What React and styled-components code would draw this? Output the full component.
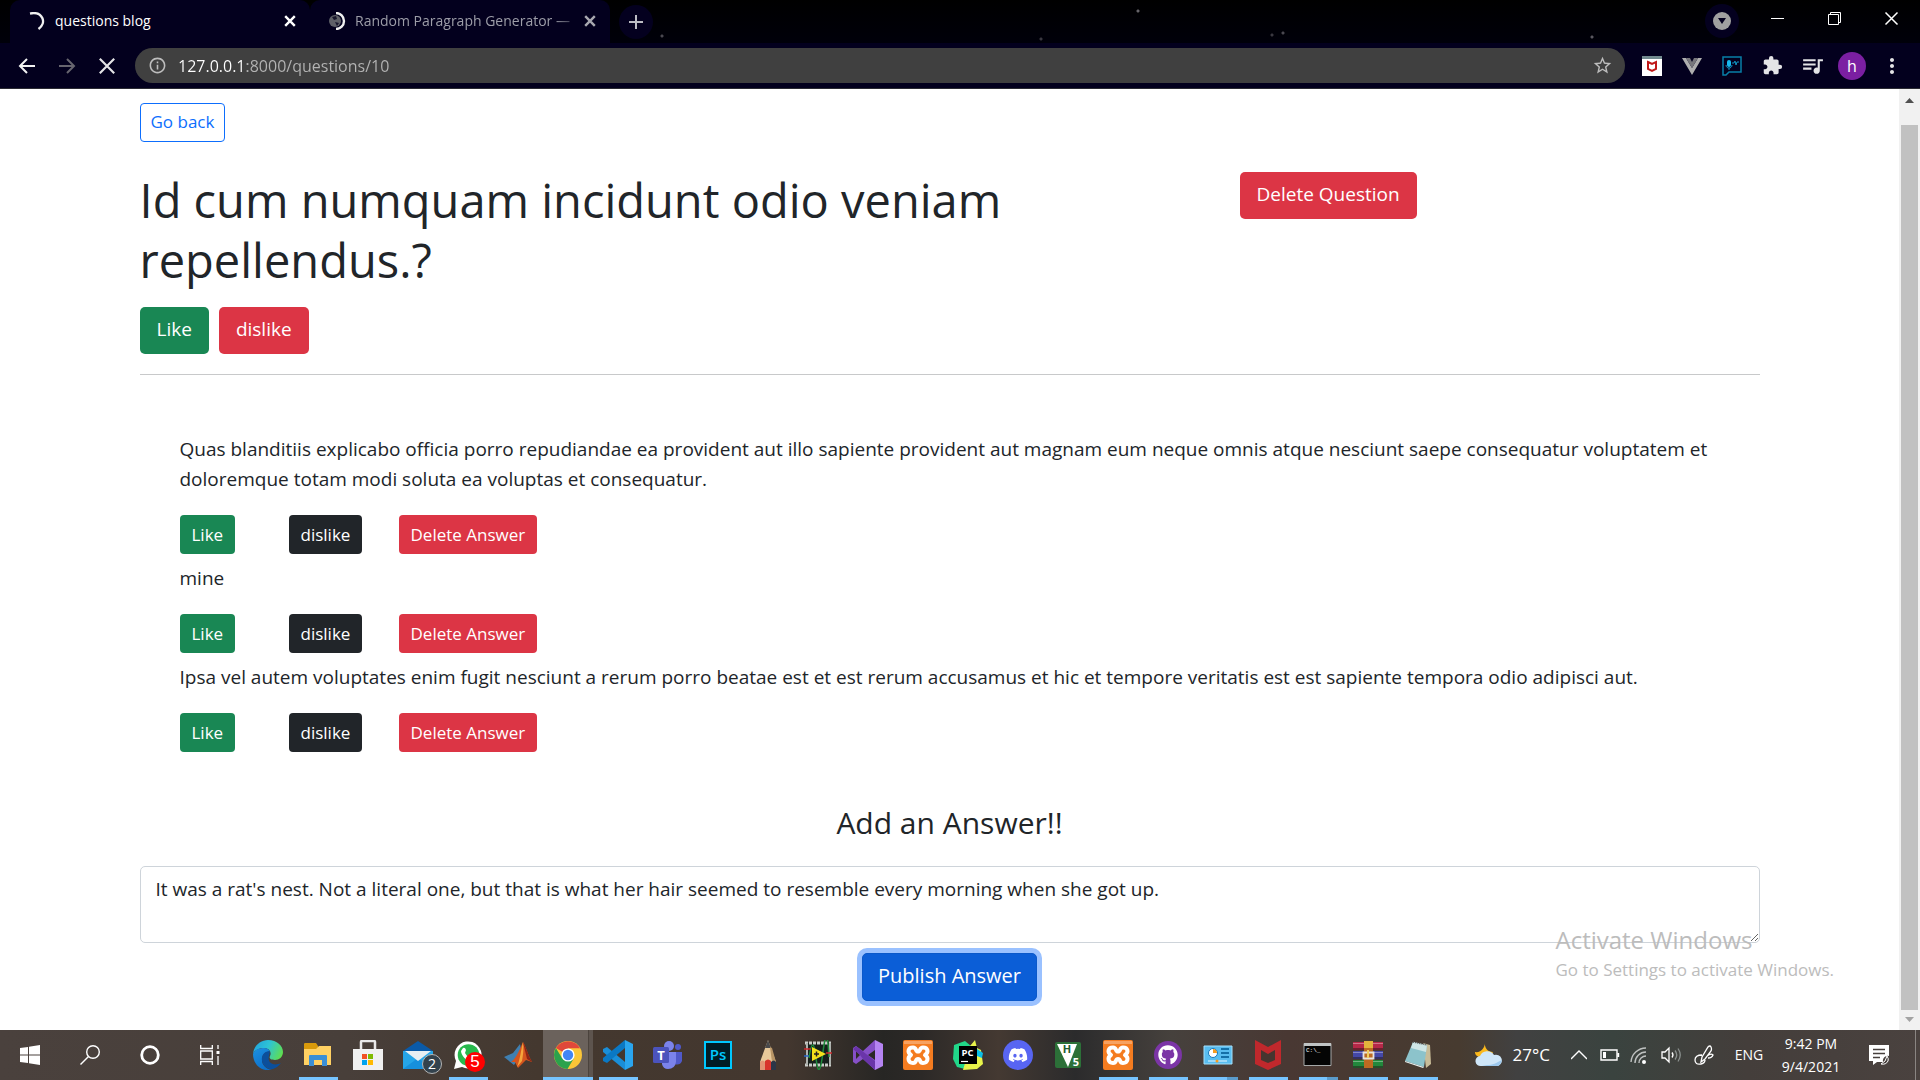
import React from 'react';
import styled, { createGlobalStyle, css } from 'styled-components';
import { FaDiscord, FaGithub } from 'react-icons/fa';
import { MdExtension, MdQueueMusic, MdStarBorder, MdInfoOutline, MdMoreVert } from 'react-icons/md';

const Global = createGlobalStyle`
  *, *::before, *::after { box-sizing: border-box; }
  body { margin: 0; background: #fff; font-family: "Open Sans", "Noto Sans", sans-serif; }
  button, input, textarea { font-family: inherit; }
  button { cursor: pointer; }
  svg { display: block; flex: none; }
`;

const Screen = styled.div`
  height: 100vh;
  display: flex;
  flex-direction: column;
  overflow: hidden;
`;

/* ---------- browser frame ---------- */

const TabStrip = styled.header`
  height: 43px;
  flex: none;
  display: flex;
  align-items: stretch;
  padding-left: 10px;
  background:
    radial-gradient(circle at 1138px 11px, #66646a 0 1px, transparent 2px),
    radial-gradient(circle at 662px 36px, #4a4850 0 1px, transparent 2px),
    radial-gradient(circle at 1041px 39px, #3a3840 0 1px, transparent 2px),
    radial-gradient(circle at 1272px 35px, #3a3840 0 1px, transparent 2px),
    radial-gradient(circle at 1283px 33px, #4a4850 0 1px, transparent 2px),
    radial-gradient(circle at 1592px 37px, #5a5860 0 1px, transparent 2px),
    linear-gradient(#000, #00000a);
`;

const Tab = styled.div`
  width: 300px;
  display: flex;
  align-items: center;
  padding: 0 12px 2px 18px;
  background: #03001e;
  border-radius: 10px 10px 0 0;
  color: ${(p) => (p.$active ? '#fff' : '#9d9da8')};
  font-size: 14px;
  line-height: 20px;
`;

const TabTitle = styled.span`
  flex: 1;
  min-width: 0;
  margin: 0 0 0 9px;
  white-space: nowrap;
  ${(p) => p.$fade && css`
    mask-image: linear-gradient(90deg, #000 88%, transparent);
  `}
`;

const IconButton = styled.button`
  width: ${(p) => p.$w || 40}px;
  height: ${(p) => p.$h || 34}px;
  flex: none;
  display: flex;
  align-items: center;
  justify-content: center;
  padding: 0;
  border: 0;
  border-radius: ${(p) => (p.$round ? '50%' : 0)};
  background: ${(p) => (p.$round ? '#04001f' : 'transparent')};
  color: ${(p) => p.$color || '#e4e4e6'};
`;

const NewTab = styled.div`
  display: flex;
  align-items: center;
  margin-left: 9px;
`;

const WindowControls = styled.div`
  display: flex;
  align-items: flex-start;
  margin-left: auto;
  padding-top: 4px;
`;

const SearchTabs = styled.div`
  margin-right: 10px;
`;

const Toolbar = styled.nav`
  height: 46px;
  flex: none;
  display: flex;
  align-items: center;
  padding: 0 8px 0 7px;
  background: #03001e;
  border-bottom: 1px solid #2b2b33;
`;

const AddressBar = styled.label`
  flex: 1;
  height: 35px;
  display: flex;
  align-items: center;
  gap: 11px;
  margin: 0 7px 0 8px;
  padding: 0 12px 0 13px;
  border-radius: 18px;
  background: #404040;
  color: #bdbdbd;
`;

const AddressInput = styled.input`
  flex: 1;
  min-width: 0;
  height: 24px;
  padding: 0;
  border: 0;
  outline: 0;
  font-size: 16px;
  line-height: 24px;
  color: transparent;
  background: linear-gradient(90deg, #fff 69px, #b4b4b4 69px);
  background-clip: text;
  -webkit-background-clip: text;
`;

const Avatar = styled.span`
  width: 28px;
  height: 28px;
  display: flex;
  align-items: center;
  justify-content: center;
  border-radius: 50%;
  background: #7b1fa2;
  color: #fff;
  font-size: 16px;
  line-height: 20px;
`;

/* ---------- page ---------- */

const Viewport = styled.div`
  flex: 1;
  min-height: 0;
  display: flex;
  position: relative;
  color: #212529;
  background: #fff;
`;

const Scroller = styled.main`
  flex: 1;
  min-width: 0;
  overflow: hidden;
`;

const Container = styled.div`
  max-width: 1650px;
  margin: 0 auto;
  padding: 14px 15px 0;
`;

const tones = {
  green: '#198754',
  red: '#dc3545',
  dark: '#212529',
};

const Button = styled.button`
  display: block;
  height: ${(p) => (p.$small ? 39 : 47)}px;
  padding: ${(p) => (p.$small ? '0 12px' : '0 17px 3px')};
  border: 0;
  border-radius: ${(p) => (p.$small ? 4 : 5)}px;
  background: ${(p) => tones[p.$tone]};
  color: #fff;
  font-size: ${(p) => (p.$small ? 17 : 19)}px;
  line-height: 28px;
  white-space: nowrap;
`;

const BackLink = styled.a`
  display: inline-flex;
  align-items: center;
  height: 39px;
  padding: 0 10px 2px;
  border: 1px solid #0d6efd;
  border-radius: 4px;
  color: #0d6efd;
  font-size: 17px;
  line-height: 26px;
  text-decoration: none;
  vertical-align: top;
`;

const Row = styled.div`
  display: flex;
  margin: 30px -15px 0;
`;

const Column = styled.div`
  width: ${(p) => p.$share};
  padding: 0 15px;
`;

const Title = styled.h1`
  margin: -2px 0 17px;
  font-size: 47px;
  font-weight: 400;
  line-height: 60px;
`;

const Votes = styled.div`
  display: flex;
  gap: 10px;
`;

const Rule = styled.hr`
  height: 1px;
  margin: 20px 0 0;
  border: 0;
  background: #c8c9ca;
`;

const Answers = styled.section`
  display: grid;
  gap: 9px;
  padding: 59px 40px 0;
`;

const AnswerText = styled.p`
  margin: 0 0 21px;
  font-size: 19px;
  line-height: 30px;
`;

const AnswerActions = styled.div`
  display: grid;
  grid-template-columns: 109px 110px auto;
  justify-content: start;
  justify-items: start;
`;

const AnswerForm = styled.form`
  display: flex;
  flex-direction: column;
  align-items: center;
  padding-top: 52px;
`;

const FormTitle = styled.h3`
  margin: 0 0 24px;
  font-size: 30px;
  font-weight: 400;
  line-height: 38px;
`;

const AnswerBox = styled.textarea`
  display: block;
  width: 100%;
  height: 77px;
  padding: 7px 15px;
  border: 1px solid #ced4da;
  border-radius: 5px;
  outline: 0;
  resize: vertical;
  overflow: hidden;
  background: #fff;
  color: #212529;
  font-size: 19px;
  line-height: 30px;
`;

const Publish = styled.button`
  height: 48px;
  margin-top: 10px;
  padding: 0 15px 2px;
  border: 1px solid #0a58ca;
  border-radius: 5px;
  background: #0b5ed7;
  box-shadow: 0 0 0 5px #9ac1ff;
  color: #fff;
  font-size: 20px;
  line-height: 28px;
`;

const Scrollbar = styled.div`
  width: 21px;
  flex: none;
  display: flex;
  flex-direction: column;
  align-items: center;
  background: #f1f1f1;
`;

const ScrollArrow = styled.span`
  height: ${(p) => (p.$down ? 20 : 36)}px;
  padding-top: ${(p) => (p.$down ? 7 : 9)}px;
`;

const Thumb = styled.div`
  flex: 1;
  width: 17px;
  background: #c1c1c1;
`;

const Watermark = styled.aside`
  position: absolute;
  right: 86px;
  bottom: 47px;
  color: #bcbcbc;
  font-size: 17px;
  line-height: 26px;
  pointer-events: none;
`;

const WatermarkTitle = styled.div`
  font-size: 24px;
  line-height: 34px;
`;

/* ---------- taskbar ---------- */

const Taskbar = styled.footer`
  height: 50px;
  flex: none;
  display: flex;
  color: #fff;
  background: linear-gradient(90deg, #4a413d 0%, #483f3a 18%, #44382f 28%, #43372f 41%, #272624 46%, #2c2927 48%, #443932 52%, #2b2b2c 56%, #46413d 61%, #493833 67%, #473b30 76%, #414141 79%, #3a433f 84%, #443e3b 91%, #4a423f 100%);
`;

const SystemGroup = styled.div`
  display: flex;
  margin-right: 3px;
`;

const SystemButton = styled(IconButton)`
  width: 60px;
  height: 50px;
`;

const AppButton = styled.button`
  width: 50px;
  height: 50px;
  flex: none;
  display: flex;
  align-items: center;
  justify-content: center;
  position: relative;
  padding: 0;
  border: 0;
  color: #fff;
  background: ${(p) => (p.$active ? 'linear-gradient(90deg, #6b625c 45px, #4b433d 45px 46px, #5d544e 46px)' : 'transparent')};
  ${(p) => p.$open && css`
    &::after {
      content: "";
      position: absolute;
      bottom: 0;
      left: ${p.$active ? 0 : 6}px;
      right: ${p.$active ? 0 : 5}px;
      height: 3px;
      background: ${p.$stacked ? 'linear-gradient(90deg, #76c4ff 28px, #5a9bcb 28px)' : '#76c4ff'};
    }
  `}
`;

const Badge = styled.span`
  position: absolute;
  left: ${(p) => (p.$alert ? 22 : 29)}px;
  top: ${(p) => (p.$alert ? 22 : 24)}px;
  width: 20px;
  height: 20px;
  border-radius: 50%;
  border: ${(p) => (p.$alert ? 0 : '1px solid #b5b5b5')};
  background: ${(p) => (p.$alert ? '#f00' : '#33424d')};
  color: #fff;
  font-family: ${(p) => (p.$alert ? '"Liberation Sans", sans-serif' : 'inherit')};
  font-size: ${(p) => (p.$alert ? 17 : 14)}px;
  line-height: ${(p) => (p.$alert ? 20 : 18)}px;
  text-align: center;
`;

const Tray = styled.div`
  flex: 1;
  display: flex;
  align-items: center;
  justify-content: flex-end;
  font-size: 14px;
  border-right: 1px solid #8a8582;
  margin-right: 4px;
`;

const Weather = styled.div`
  display: flex;
  align-items: center;
  gap: 10px;
  margin-right: 14px;
  font-size: 17px;
  line-height: 24px;
`;

const Language = styled.div`
  width: 60px;
  text-align: center;
  line-height: 20px;
`;

const Clock = styled.time`
  width: 64px;
  text-align: center;
  font-size: 14px;
  line-height: 23px;
  white-space: nowrap;
`;

/* ---------- drawings ---------- */

const Svg = ({ s = 30, vb = '0 0 30 30', children }) => (
  <svg width={s} height={s} viewBox={vb} fill="none" aria-hidden="true">{children}</svg>
);

const Cross = ({ s = 10, w = 2 }) => (
  <Svg s={s} vb="0 0 10 10"><path d="M1 1l8 8M9 1l-8 8" stroke="currentColor" strokeWidth={w} /></Svg>
);
const Spinner = ({ globe }) => (
  <Svg s={18} vb="0 0 18 18">
    {globe && <><circle cx="7" cy="9" r="6" fill="#5f6068" /><path d="M4 5l4-1 1 3-3 1zM7 10l4 1-2 3z" fill="#17152c" /></>}
    <path d={globe ? 'M8 1a8 8 0 0 1 0 16' : 'M2 1.500C15-1 19 11 10.500 17'} stroke="#f0f0f0" strokeWidth="2.400" />
  </Svg>
);
const Plus = () => <Svg s={16} vb="0 0 16 16"><path d="M8 1v14M1 8h14" stroke="#bcbcc4" strokeWidth="2" /></Svg>;
const Arrow = ({ forward }) => (
  <Svg s={18} vb="0 0 18 18">
    <path d={forward ? 'M1 9h15M9 2l7 7-7 7' : 'M17 9H2M9 2L2 9l7 7'} stroke={forward ? '#67656f' : '#f2f2f2'} strokeWidth="2" />
  </Svg>
);
const TabSearch = () => <Svg s={18} vb="0 0 18 18"><circle cx="9" cy="9" r="9" fill="#a0a0a0" /><path d="M5 6h8l-4 6z" fill="#04001f" /></Svg>;
const Minimize = () => <Svg s={13} vb="0 0 13 13"><path d="M0 6.500h13" stroke="#fff" /></Svg>;
const Restore = () => <Svg s={13} vb="0 0 13 13"><path d="M.5 2.500h10v10H.5zM2.500 2V.5h10v10H11" stroke="#fff" /></Svg>;
const McAfeeExt = () => (
  <Svg s={20} vb="0 0 20 20"><path fill="#fff" d="M0 0h20v20H0z" /><path fill="#71898e" d="M0 0h20v3H0z" /><path d="M6 6l4 2 4-2v7l-4 2-4-2z" stroke="#c01818" strokeWidth="2" /></Svg>
);
const VueExt = () => <Svg s={20} vb="0 0 20 20"><path d="M0 2h4l6 10 6-10h4L10 19z" fill="#aeaeae" /><path d="M4 2h4l2 4 2-4h4l-6 10z" fill="#77777c" /></Svg>;
const VoiceExt = () => (
  <Svg s={20} vb="0 0 20 20">
    <path d="M1 19V1h18v15H7l-3 3z" stroke="#087fa8" strokeWidth="1.500" />
    <rect x="5" y="4" width="4" height="7" rx="2" fill="#16b9ed" /><path d="M4 9c0 4 6 4 6 0M7 12v2M10 7h2l1-2 1 4 1-3h2" stroke="#1094c0" />
  </Svg>
);

const WindowsLogo = () => <Svg s={20} vb="0 0 20 20"><path fill="#fff" d="M0 3l8-1v7.500H0zM9 1.800L20 0v9.500H9zM0 10.500h8V18l-8-1zM9 10.500h11V20L9 18.200z" /></Svg>;
const Search = () => <Svg s={20} vb="0 0 20 20"><circle cx="13" cy="7" r="6.300" stroke="#fff" strokeWidth="1.400" /><path d="M8.500 11.500L.5 19.500" stroke="#fff" strokeWidth="1.400" /></Svg>;
const Cortana = () => <Svg s={20} vb="0 0 20 20"><circle cx="10" cy="10" r="8.300" stroke="#fff" strokeWidth="2.800" /></Svg>;
const TaskView = () => <Svg s={20} vb="0 0 20 20"><path d="M.7 0v3.500h11.600V0M.7 20v-3.500h11.600V20M.7 6h11.600v8H.7zM18 0v4M18 11v9" stroke="#fff" strokeWidth="1.300" /><path fill="#fff" d="M16.500 6h3v3h-3z" /></Svg>;

const Edge = () => (
  <Svg>
    <defs>
      <linearGradient id="edgeTop" x1="0" y1="0" x2="30" y2="14" gradientUnits="userSpaceOnUse"><stop stopColor="#1f9fe0" /><stop offset=".5" stopColor="#2ec4d4" /><stop offset="1" stopColor="#62e04a" /></linearGradient>
      <linearGradient id="edgeLow" x1="2" y1="8" x2="16" y2="30" gradientUnits="userSpaceOnUse"><stop stopColor="#1c8fe0" /><stop offset="1" stopColor="#0a6cc8" /></linearGradient>
    </defs>
    <path d="M0 14C1 5 8 0 15 0c9 0 15 6 15 12 0 5-4 8-8 8-5 0-6-2-5-4 2-4-1-8-6-8-6 0-10 3-11 6z" fill="url(#edgeTop)" />
    <path d="M0 14c2-5 7-6 11-6 3 0 5 1 6 4-5-1-8 3-8 8s4 9 10 10C8 32 0 24 0 14z" fill="url(#edgeLow)" />
    <path d="M17 11c-5 0-9 4-8 10 1 5 6 9 11 8 3-1 6-3 8-6-8 4-14-1-12-7z" fill="#0b4f9c" />
  </Svg>
);
const Explorer = () => (
  <Svg>
    <path d="M1 4c0-1 1-1 1-1h11l2 3v5H1z" fill="#d99a0b" /><path d="M1 9h12l3-3h12v19H1z" fill="#ffd163" />
    <path d="M6 16q0-1 1-1h16q1 0 1 1v10h-5v-6h-8v6H6z" fill="#3a8fd6" />
  </Svg>
);
const Store = () => (
  <Svg>
    <path d="M8 9V2q0-1 1-1h12q1 0 1 1v7" stroke="#e9e9e9" strokeWidth="2.500" /><path d="M0 9h30v21H0z" fill="#f0f0f0" />
    <path d="M9 14h5v5H9z" fill="#f25022" /><path d="M15 14h5v5h-5z" fill="#7fba00" /><path d="M9 20h5v5H9z" fill="#00a4ef" /><path d="M15 20h5v5h-5z" fill="#ffb900" />
  </Svg>
);
const Mail = () => (
  <Svg><path d="M0 11L15 1l15 10v8H0z" fill="#0a5aa8" /><path d="M0 11h30v18H0z" fill="#25a5e8" /><path d="M0 29l15-11 15 11z" fill="#1690dc" /><path d="M2 11h26L15 21z" fill="#e8eef2" /></Svg>
);
const Whats = () => (
  <Svg><path d="M1 29l2-8a13.500 13.500 0 1 1 6 6z" fill="#fff" /><circle cx="15.500" cy="15" r="10.800" fill="#28b84c" /><path d="M10 8q2-1 3 2l-1 3q2 4 5 5l2-2 4 2q0 4-4 4C13 21 8 15 8 11z" fill="#fff" /></Svg>
);
const Matlab = () => (
  <Svg><path d="M1 17l9-4 7-9 2 9-8 12z" fill="#3f7fb0" /><path d="M8 22c6-4 9-14 12-20 3 5 5 13 9 20l-6-2-8 8-3-6z" fill="#d4541e" /><path d="M20 2c-2 8-3 18-6 25l5-6c1-6 2-12 1-19z" fill="#f5a53c" /><path d="M20 2c3 5 5 13 9 20l-5-3z" fill="#8f2415" /></Svg>
);
const Chrome = () => (
  <Svg s={28} vb="0 0 28 28">
    <circle cx="14" cy="14" r="14" fill="#fbc638" />
    <path d="M14 14L1.900 7A14 14 0 0 1 26.100 7.200H14z" fill="#e0483a" />
    <path d="M1.900 7A14 14 0 0 0 13.500 28L20 17 8 17z" fill="#2ba24c" />
    <circle cx="14" cy="14" r="6.600" fill="#fff" /><circle cx="14" cy="14" r="5.200" fill="#4285f4" />
  </Svg>
);
const Code = () => (
  <Svg><path d="M0 9l4-2 18 15v8L0 12z" fill="#1a8ed8" /><path d="M0 18L22 0v8L4 23l-4-2z" fill="#0a78c4" /><path d="M22 0l8 4v22l-8 4z" fill="#2aa5ee" /></Svg>
);
const Teams = () => (
  <Svg><circle cx="16" cy="6" r="5" fill="#7b83eb" /><circle cx="25" cy="7" r="3" fill="#5059c9" /><path d="M20 12h9v9q-2 5-8 3z" fill="#5059c9" /><path d="M9 12h14v10q-1 7-8 7-5 0-6-5z" fill="#7b83eb" /><rect y="7" width="16" height="16" rx="1.500" fill="#4b53bc" /><text x="8" y="20" fill="#fff" fontFamily="Open Sans, sans-serif" fontWeight="700" fontSize="13" textAnchor="middle">T</text></Svg>
);
const Photoshop = () => (
  <Svg><rect x="2" y="2" width="26" height="26" fill="#001d26" stroke="#00c8ff" strokeWidth="2" /><text x="15" y="20" fill="#00c8ff" fontFamily="Open Sans, sans-serif" fontSize="15" fontWeight="600" textAnchor="middle">Ps</text></Svg>
);
const Pencil = () => (
  <Svg><path d="M15 0l-8 22v8h16v-8z" fill="#e8c99a" /><path d="M15 0l-3 8h6z" fill="#4a4a4c" /><path d="M17 7l2 1 4 14-4 0z" fill="#b89566" /><path d="M7 22q3-3 5 0v8H7z" fill="#e29474" /><path d="M12 21q3-3 6 0v9h-6z" fill="#d8342c" /><path d="M18 22q3-3 5 0v8h-5z" fill="#2c3648" /></Svg>
);
const LabView = () => (
  <Svg><path d="M4 3h23v22H4z" fill="#16201c" /><path d="M2 3h26M2 25h26" stroke="#c8ccc8" strokeWidth="3" strokeDasharray="3 1" /><path d="M4 3v22M27 3v22" stroke="#aeb2ae" strokeWidth="2" /><path d="M6 18q4-26 7 0t7-6 6 5" stroke="#1f8c3c" strokeWidth="1.500" /><path d="M9 7l14 7-14 7z" fill="#f5e11c" /><path d="M11 14h5M13.500 11.500v5" stroke="#222" strokeWidth="1.500" /><path d="M1 9h7M23 13h6" stroke="#d0282c" strokeWidth="1.500" /><path d="M1 16h5" stroke="#2868c8" strokeWidth="1.500" /></Svg>
);
const VisualStudio = () => (
  <Svg><path d="M22 0l8 4v22l-8 4z" fill="#b584f2" /><path fillRule="evenodd" d="M22 0v10l-7 5 7 5v10L10 19l-7 5-3-2V8l3-2 7 5zM3 11v8l4-4z" fill="#8650c7" /><path d="M3 6l19 15v9L10 19l-3-4-7-6z" fill="#6a35aa" /></Svg>
);
const Xampp = () => (
  <Svg><rect width="30" height="30" rx="2" fill="#f47c20" /><path d="M1 1h28v3H1z" fill="#f7a261" /><path d="M10 7.500c-5 0-6 5-2 7.500-4 2.500-3 8 2 8 4 0 2-4 5-4s1 4 5 4c5 0 6-5.500 2-8 4-2.500 3-7.500-2-7.500-4 0-2 4-5 4s-1-4-5-4z" stroke="#fff" strokeWidth="4" strokeLinejoin="round" /></Svg>
);
const PyCharm = () => (
  <Svg><path d="M1 5l11-4 6 5-6 23-8-2-4-8z" fill="#21d789" /><path d="M17 6l5-6 2 8 4 2 2 14-6 5-14 1z" fill="#e8f34a" /><path d="M24 9l6 4-1 5-5-2z" fill="#0cc0e8" /><path d="M6 6h18v18H6z" fill="#000" /><text x="14.500" y="15.500" fill="#fff" fontFamily="Open Sans, sans-serif" fontWeight="700" fontSize="9.500" textAnchor="middle">PC</text><path d="M8 21.500h7" stroke="#fff" strokeWidth="1.200" /></Svg>
);
const Discord = () => <Svg><circle cx="15" cy="15" r="15" fill="#5865f2" /><FaDiscord x="5" y="5" size={20} color="#fff" /></Svg>;
const Hvs = () => (
  <Svg><rect x="2" y="2" width="26" height="26" rx="2" fill="#2c7038" /><path d="M4 4h20L15 27z" fill="#fff" /><text x="14" y="13" fill="#235c2e" fontFamily="Open Sans, sans-serif" fontWeight="700" fontSize="11" textAnchor="middle">H</text><text x="23" y="26" fill="#fff" fontFamily="Open Sans, sans-serif" fontWeight="700" fontSize="11" textAnchor="middle">5</text></Svg>
);
const Hub = () => <Svg><circle cx="15" cy="15" r="14" fill="#7b35a6" /><FaGithub x="5" y="5" size={20} color="#fff" /></Svg>;
const Panel = () => (
  <Svg><path d="M1 6h28v18H1z" fill="#58bdf0" stroke="#a5e0fb" /><circle cx="10" cy="13" r="4.500" fill="#fff" stroke="#1878b8" /><path d="M10 13V9a4 4 0 0 1 4 4z" fill="#f59b20" /><path d="M18 9h8M18 13h8M18 17h8" stroke="#1470a8" strokeWidth="2" /><path d="M5 21h19" stroke="#e8f8ff" /><circle cx="14" cy="21" r="1.500" fill="#f59b20" /></Svg>
);
const McAfee = () => <Svg><path d="M2 0l13 7 13-7v24l-13 6-13-6z" fill="#c0282c" /><path d="M8 10l7 4 7-4v10l-7 3-7-3z" fill="#46352f" /></Svg>;
const Terminal = () => <Svg><path d="M1 3.500h27v22H1z" fill="#050505" stroke="#a5a8a8" /><path d="M1 3h27v3H1z" fill="#c0c4c4" /><text x="3" y="12" fill="#fff" fontFamily="Liberation Mono, monospace" fontSize="6">C:\_</text></Svg>;
const Rar = () => (
  <Svg><path d="M0 2h30v8H0z" fill="#b52848" /><path d="M0 11h30v8H0z" fill="#4448a8" /><path d="M0 20h30v8H0z" fill="#22883c" /><path d="M0 3.500h30M0 12.500h30M0 21.500h30" stroke="#fff" strokeOpacity=".35" /><path d="M0 9h30M0 18h30M0 27h30" stroke="#241818" /><path d="M11 2h9v26h-9z" fill="#bd6a22" /><path d="M11 1h9v7h-9z" fill="#e2b43c" /><path d="M10.500 12.500h10v6h-10z" stroke="#e8e4dc" strokeWidth="1.800" /><path d="M15 10v8" stroke="#f0ce60" strokeWidth="2" /></Svg>
);
const Notes = () => <Svg><path d="M20 3l7 2 1 19-5 4z" fill="#c8bc98" /><path d="M10 2l14 3-3 22-19-6z" fill="#8cc3cb" /><path d="M10 2l14 3-1 7L8 8z" fill="#cfe6e6" /><path d="M2 21l19 6-1 1-18-6z" fill="#e8f0ee" /><path d="M10 2l14 3" stroke="#555" strokeWidth="1.500" strokeDasharray="1 1" /></Svg>;

const WeatherIcon = () => (
  <Svg s={28} vb="0 0 28 28"><path d="M10 1c-1 6 3 10 8 10-2 5-10 7-14 5-3-1-4-3-4-5 6 1 10-4 10-10z" fill="#fbb91c" /><path d="M6 25a5 5 0 0 1-1-10 8 8 0 0 1 14-1 5.500 5.500 0 1 1 4 11z" fill="#cfe6f8" /><path d="M12 24c6 0 9-2 15-5-1 4-3 6-5 6H7z" fill="#9dc8ec" /></Svg>
);
const Caret = () => <Svg s={16} vb="0 0 16 16"><path d="M0 12l8-8 8 8" stroke="#fff" strokeWidth="1.400" /></Svg>;
const Battery = () => <Svg s={20} vb="0 0 20 20"><path d="M1 5h16v10H1zM18.500 8v4" stroke="#fff" strokeWidth="1.400" /><path d="M3 7h3v6H3z" fill="#fff" /></Svg>;
const Wifi = () => <Svg s={18} vb="0 0 18 18"><path d="M1 16A15 15 0 0 1 16 2M5 17A11 11 0 0 1 16 6M9 17a7 7 0 0 1 7-7" stroke="#bfc2c1" strokeWidth="1.400" /><circle cx="14" cy="16" r="2" fill="#fff" /></Svg>;
const Speaker = () => <Svg s={20} vb="0 0 20 20"><path d="M1 7h3l4-4v14l-4-4H1z" stroke="#fff" strokeWidth="1.300" /><path d="M11 7.500q2 2.500 0 5" stroke="#fff" strokeWidth="1.300" /><path d="M14 5.500q3.500 4.500 0 9M17 3.500q4.500 6.500 0 13" stroke="#8b918f" strokeWidth="1.300" /></Svg>;
const Pen = () => <Svg s={20} vb="0 0 20 20"><path d="M7 17l1-5 6-10q2-2 3 0t0 4l-6 8zM8 10q-7 0-7 5t6 4q4-1 4-4M13 11q4-3 6-1-1 3-5 3" stroke="#fff" strokeWidth="1.300" /></Svg>;
const Notice = () => <Svg s={20} vb="0 0 20 20"><path d="M0 0h20v11a5 5 0 0 0-6 6H8l-4 3v-4H0z" fill="#fff" /><path d="M4 4.500h12M4 8.500h12M4 12.500h7" stroke="#47403d" strokeWidth="1.300" /><path d="M18 11q2 3 1 5-2 4-7 3 5-2 6-8z" stroke="#fff" /></Svg>;

/* ---------- data ---------- */

const answers = [
  'Quas blanditiis explicabo officia porro repudiandae ea provident aut illo sapiente provident aut magnam eum neque omnis atque nesciunt saepe consequatur voluptatem et doloremque totam modi soluta ea voluptas et consequatur.',
  'mine',
  'Ipsa vel autem voluptates enim fugit nesciunt a rerum porro beatae est et est rerum accusamus et hic et tempore veritatis est est sapiente tempora odio adipisci aut.',
];

const apps = [
  { name: 'Edge', Icon: Edge },
  { name: 'File Explorer', Icon: Explorer, open: true },
  { name: 'Store', Icon: Store },
  { name: 'Mail', Icon: Mail, badge: '2' },
  { name: 'WhatsApp', Icon: Whats, badge: '5', alert: true, open: true },
  { name: 'MATLAB', Icon: Matlab },
  { name: 'Chrome', Icon: Chrome, open: true, active: true },
  { name: 'VS Code', Icon: Code, open: true },
  { name: 'Teams', Icon: Teams },
  { name: 'Photoshop', Icon: Photoshop },
  { name: 'Sketch pencil', Icon: Pencil },
  { name: 'LabVIEW', Icon: LabView },
  { name: 'Visual Studio', Icon: VisualStudio },
  { name: 'XAMPP', Icon: Xampp },
  { name: 'PyCharm', Icon: PyCharm },
  { name: 'Discord', Icon: Discord },
  { name: 'HVS', Icon: Hvs },
  { name: 'XAMPP control', Icon: Xampp, open: true },
  { name: 'GitHub', Icon: Hub, open: true },
  { name: 'Control Panel', Icon: Panel, open: true, stacked: true },
  { name: 'McAfee', Icon: McAfee, open: true },
  { name: 'Command Prompt', Icon: Terminal, open: true, stacked: true },
  { name: 'WinRAR', Icon: Rar, open: true },
  { name: 'Notepad', Icon: Notes, open: true },
];

function BrowserFrame() {
  return (
    <>
      <TabStrip>
        <Tab $active>
          <Spinner />
          <TabTitle>questions blog</TabTitle>
          <IconButton $w={16} $h={20} $color="#fff" aria-label="Close tab"><Cross s={12} /></IconButton>
        </Tab>
        <Tab>
          <Spinner globe />
          <TabTitle $fade>Random Paragraph Generator —</TabTitle>
          <IconButton $w={16} $h={20} $color="#a8a8b0" aria-label="Close tab"><Cross s={12} /></IconButton>
        </Tab>
        <NewTab><IconButton $w={34} $round aria-label="New tab"><Plus /></IconButton></NewTab>
        <WindowControls>
          <SearchTabs><IconButton $w={34} $round aria-label="Search tabs"><TabSearch /></IconButton></SearchTabs>
          <IconButton $w={57} $h={28} aria-label="Minimize"><Minimize /></IconButton>
          <IconButton $w={57} $h={28} aria-label="Restore"><Restore /></IconButton>
          <IconButton $w={57} $h={28} $color="#fff" aria-label="Close"><Cross s={15} w={1} /></IconButton>
        </WindowControls>
      </TabStrip>
      <Toolbar>
        <IconButton aria-label="Back"><Arrow /></IconButton>
        <IconButton aria-label="Forward"><Arrow forward /></IconButton>
        <IconButton aria-label="Stop"><Cross s={18} w={1.2} /></IconButton>
        <AddressBar>
          <MdInfoOutline size={19} />
          <AddressInput aria-label="Address" defaultValue="127.0.0.1:8000/questions/10" spellCheck={false} />
          <MdStarBorder size={21} />
        </AddressBar>
        <IconButton aria-label="McAfee WebAdvisor"><McAfeeExt /></IconButton>
        <IconButton aria-label="Vue devtools"><VueExt /></IconButton>
        <IconButton aria-label="Voice typing"><VoiceExt /></IconButton>
        <IconButton aria-label="Extensions"><MdExtension size={21} /></IconButton>
        <IconButton aria-label="Media"><MdQueueMusic size={25} /></IconButton>
        <IconButton aria-label="Profile"><Avatar>h</Avatar></IconButton>
        <IconButton aria-label="Menu"><MdMoreVert size={24} /></IconButton>
      </Toolbar>
    </>
  );
}

function Answer({ text }) {
  return (
    <article>
      <AnswerText>{text}</AnswerText>
      <AnswerActions>
        <Button $small $tone="green">Like</Button>
        <Button $small $tone="dark">dislike</Button>
        <Button $small $tone="red">Delete Answer</Button>
      </AnswerActions>
    </article>
  );
}

function QuestionPage() {
  return (
    <Container>
      <BackLink href="#questions">Go back</BackLink>
      <Row>
        <Column $share="66.6667%">
          <Title>Id cum numquam incidunt odio veniam repellendus.?</Title>
          <Votes>
            <Button $tone="green">Like</Button>
            <Button $tone="red">dislike</Button>
          </Votes>
        </Column>
        <Column $share="33.3333%">
          <Button $tone="red">Delete Question</Button>
        </Column>
      </Row>
      <Rule />
      <Answers>
        {answers.map((text) => <Answer key={text} text={text} />)}
      </Answers>
      <AnswerForm onSubmit={(e) => e.preventDefault()}>
        <FormTitle><label htmlFor="answer">Add an Answer!!</label></FormTitle>
        <AnswerBox
          id="answer"
          spellCheck={false}
          defaultValue="It was a rat's nest. Not a literal one, but that is what her hair seemed to resemble every morning when she got up."
        />
        <Publish type="submit">Publish Answer</Publish>
      </AnswerForm>
    </Container>
  );
}

function WindowsTaskbar() {
  return (
    <Taskbar>
      <SystemGroup>
        <SystemButton aria-label="Start"><WindowsLogo /></SystemButton>
        <SystemButton aria-label="Search"><Search /></SystemButton>
        <SystemButton aria-label="Cortana"><Cortana /></SystemButton>
        <SystemButton aria-label="Task view"><TaskView /></SystemButton>
      </SystemGroup>
      {apps.map(({ name, Icon, badge, alert, open, active, stacked }) => (
        <AppButton key={name} aria-label={name} $open={open} $active={active} $stacked={stacked}>
          <Icon />
          {badge && <Badge $alert={alert}>{badge}</Badge>}
        </AppButton>
      ))}
      <Tray>
        <Weather><WeatherIcon />27°C</Weather>
        <IconButton $w={30} aria-label="Hidden icons"><Caret /></IconButton>
        <IconButton $w={31} aria-label="Battery"><Battery /></IconButton>
        <IconButton $w={28} aria-label="Network"><Wifi /></IconButton>
        <IconButton $w={36} aria-label="Volume"><Speaker /></IconButton>
        <IconButton $w={30} aria-label="Pen"><Pen /></IconButton>
        <Language>ENG</Language>
        <Clock>9:42 PM<br />9/4/2021</Clock>
        <IconButton $w={72} aria-label="Notifications"><Notice /></IconButton>
      </Tray>
    </Taskbar>
  );
}

export default function App() {
  return (
    <Screen>
      <Global />
      <BrowserFrame />
      <Viewport>
        <Scroller><QuestionPage /></Scroller>
        <Scrollbar aria-hidden="true">
          <ScrollArrow><Svg s={9} vb="0 0 9 9"><path d="M0 5l4.500-5L9 5z" fill="#505050" /></Svg></ScrollArrow>
          <Thumb />
          <ScrollArrow $down><Svg s={9} vb="0 0 9 9"><path d="M0 0l4.500 5L9 0z" fill="#a3a3a3" /></Svg></ScrollArrow>
        </Scrollbar>
        <Watermark>
          <WatermarkTitle>Activate Windows</WatermarkTitle>
          Go to Settings to activate Windows.
        </Watermark>
      </Viewport>
      <WindowsTaskbar />
    </Screen>
  );
}
